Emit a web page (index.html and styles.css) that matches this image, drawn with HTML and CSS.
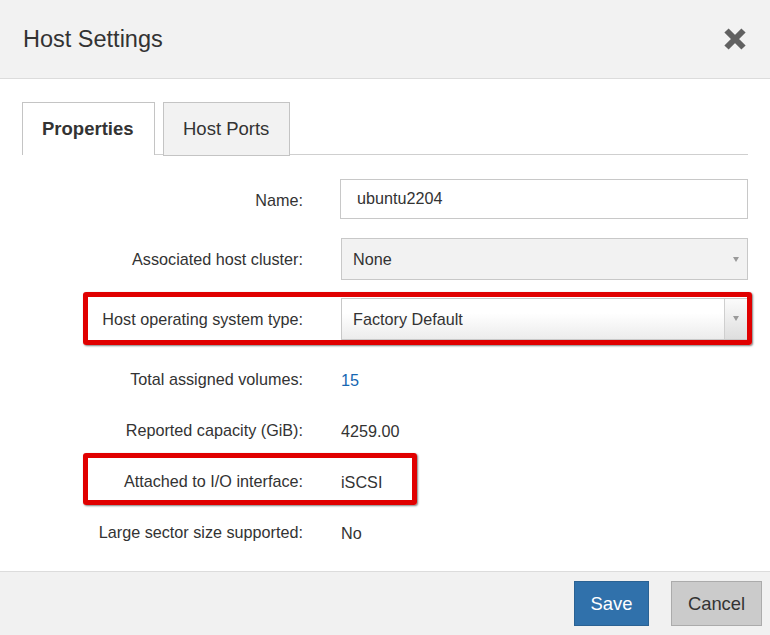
FILE: index.html
```html
<!DOCTYPE html>
<html lang="en">
<head>
<meta charset="utf-8">
<title>Host Settings</title>
<link rel="stylesheet" href="styles.css">
</head>
<body>
<div class="dialog">
  <header class="dlg-header">
    <h1 class="dlg-title">Host Settings</h1>
    <button class="close" aria-label="Close">
      <svg width="24" height="24" viewBox="0 0 24 24"><path d="M3.5 3.5 L20.5 20.5 M20.5 3.5 L3.5 20.5" stroke="#616161" stroke-width="6" fill="none" stroke-linecap="butt"/></svg>
    </button>
  </header>
  <div class="dlg-body">
    <div class="tabs">
      <div class="tab active">Properties</div>
      <div class="tab">Host Ports</div>
    </div>
    <div class="form">
      <div class="row row-name">
        <div class="label">Name:</div>
        <div class="input">ubuntu2204</div>
      </div>
      <div class="row row-cluster">
        <div class="label">Associated host cluster:</div>
        <div class="select plain">None<span class="arrow"></span></div>
      </div>
      <div class="row row-os hl hl-wide">
        <div class="label">Host operating system type:</div>
        <div class="select grad">Factory Default<span class="arrow-box"><span class="arrow"></span></span></div>
      </div>
      <div class="row text-row">
        <div class="label">Total assigned volumes:</div>
        <div class="value link">15</div>
      </div>
      <div class="row text-row">
        <div class="label">Reported capacity (GiB):</div>
        <div class="value">4259.00</div>
      </div>
      <div class="row text-row hl hl-narrow">
        <div class="label">Attached to I/O interface:</div>
        <div class="value">iSCSI</div>
      </div>
      <div class="row text-row">
        <div class="label">Large sector size supported:</div>
        <div class="value">No</div>
      </div>
    </div>
  </div>
  <footer class="dlg-footer">
    <button class="btn btn-primary">Save</button>
    <button class="btn btn-default">Cancel</button>
  </footer>
</div>
</body>
</html>
```

FILE: styles.css
```css
*, *::before, *::after { box-sizing: border-box; }
html, body { margin: 0; padding: 0; background: #fff; }
body {
  font-family: "Liberation Sans", Arial, sans-serif;
  color: #333;
}
.dialog {
  width: 770px;
  height: 635px;
  display: flex;
  flex-direction: column;
  background: #fff;
}
.dlg-header {
  height: 79px;
  flex: 0 0 79px;
  background: #f2f2f2;
  border-bottom: 1px solid #dcdcdc;
  display: flex;
  align-items: center;
  justify-content: space-between;
  padding: 0 23px 0 23px;
}
.dlg-title {
  margin: 0;
  font-size: 23.5px;
  font-weight: normal;
  color: #333;
}
.close {
  border: 0;
  background: transparent;
  padding: 0;
  width: 24px;
  height: 24px;
  display: flex;
}
.dlg-body {
  flex: 1 1 auto;
  padding: 23px 22px 0 22px;
}
.tabs {
  display: flex;
  align-items: flex-start;
  height: 53px;
  border-bottom: 1px solid #cfcfcf;
}
.tab {
  font-size: 18.5px;
  display: flex;
  align-items: center;
  padding: 0 0 0 19px;
  border: 1px solid #c4c4c4;
  color: #333;
}
.tab.active {
  width: 133px;
  height: 53px;
  background: #fff;
  border-bottom: 0;
  font-weight: bold;
}
.tab + .tab {
  margin-left: 8px;
  width: 127px;
  height: 54px;
  background: #f2f2f2;
  padding-bottom: 1px;
}
.form {
  margin-top: 24px;
  display: flex;
  flex-direction: column;
}
.row {
  position: relative;
  display: flex;
  align-items: center;
  font-size: 16.2px;
}
.label {
  flex: 0 0 281px;
  text-align: right;
  color: #333;
}
.row-name { height: 40px; margin-bottom: 19px; }
.row-cluster { height: 42px; margin-bottom: 18px; }
.row-os { height: 42px; margin-bottom: 14px; }
.text-row { height: 51px; }
.row-name .label { padding-top: 2px; }
.input {
  margin-left: 37px;
  width: 408px;
  height: 40px;
  border: 1px solid #c8c8c8;
  background: #fff;
  padding-left: 16px;
  display: flex;
  align-items: center;
  padding-bottom: 2px;
}
.select {
  margin-left: 38px;
  width: 407px;
  height: 42px;
  border: 1px solid #c8c8c8;
  padding-left: 11px;
  display: flex;
  align-items: center;
  position: relative;
}
.select.plain { background: #f2f2f2; }
.select.grad {
  background: linear-gradient(#ffffff 0%, #ffffff 35%, #ececec 100%);
}
.arrow {
  width: 0;
  height: 0;
  border-left: 3.5px solid transparent;
  border-right: 3.5px solid transparent;
  border-top: 5px solid #9a9a9a;
  margin-left: auto;
  margin-right: 8px;
}
.arrow-box {
  margin-left: auto;
  width: 23px;
  align-self: stretch;
  border-left: 1px solid #cfcfcf;
  background: linear-gradient(#fbfbfb, #dedede);
  display: flex;
  align-items: center;
  justify-content: center;
}
.arrow-box .arrow { margin: 0 0 2px 0; }
.value {
  margin-left: 38px;
  color: #333;
  padding-top: 1px;
}
.value.link { color: #1667b2; }
.hl::after {
  content: "";
  position: absolute;
  left: 61px;
  border: 5px solid #e00000;
  border-radius: 3px;
  box-shadow: 1px 1px 2px rgba(0, 0, 0, 0.5);
  pointer-events: none;
}
.hl-wide::after {
  top: -6px;
  right: -4px;
  bottom: -5px;
}
.hl-narrow::after {
  top: -3px;
  width: 334px;
  height: 52px;
}
.dlg-footer {
  flex: 0 0 64px;
  height: 64px;
  border-top: 1px solid #dcdcdc;
  background: #f1f1f1;
  display: flex;
  justify-content: flex-end;
  align-items: center;
  padding-right: 8px;
  gap: 22px;
}
.btn {
  height: 45px;
  font-family: "Liberation Sans", Arial, sans-serif;
  font-size: 18.4px;
  padding: 0;
  cursor: pointer;
}
.btn-primary {
  width: 75px;
  background: #3071ab;
  border: 1px solid #2a6293;
  color: #fff;
}
.btn-default {
  width: 91px;
  background: #cbcbcb;
  border: 1px solid #ababab;
  color: #333;
}
```
